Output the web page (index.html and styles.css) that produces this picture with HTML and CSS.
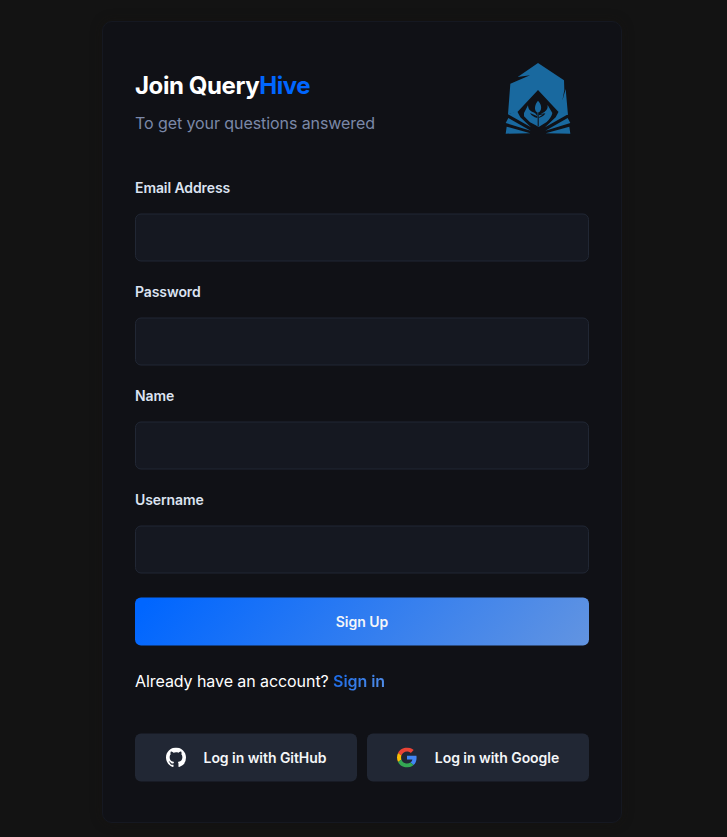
FILE: index.html
```html
<!DOCTYPE html>
<html lang="en">
<head>
<meta charset="utf-8">
<title>Join QueryHive</title>
<link rel="stylesheet" href="styles.css">
</head>
<body>
<main class="card">
  <header class="header">
    <div>
      <h1 class="title">Join Query<span>Hive</span></h1>
      <p class="subtitle">To get your questions answered</p>
    </div>
    <svg class="logo" viewBox="0 0 258 258" fill="#19699f" aria-hidden="true">
      <path d="M129 24 207 76 208 105 202 137 212 102 219 180 196 172 190 170 129 105 68 170 62 172 39 178 46 86 105 61 68 66Z"/>
      <path d="M39 178 66 168 76 187 108 217ZM40 189 107 227 32 204ZM35 215 106 235 32 236Z"/>
      <path d="M219 178 192 168 182 187 150 217ZM218 189 151 227 226 204ZM223 215 152 235 226 236Z"/>
      <path d="M129 137Q141 150 138 163Q136 171 131 173L131 181 145 178 131 187V216Q119 209 105 202L87 184V174L99 151Q99 165 111 170Q124 174 127 184V173Q121 171 120 162Q119 149 129 137Z"/>
      <path d="M158 150 172 174Q170 187 155 201L131 216V189Q147 184 151 175L137 177Q160 169 158 150Z"/>
      <path d="M105 174 127 184V189Q111 185 105 174Z" fill="#101116"/>
      <path d="M128 172H131V214H128Z" fill="#101116"/>
    </svg>
  </header>
  <form>
    <label class="field">Email Address<input type="email"></label>
    <label class="field">Password<input type="password"></label>
    <label class="field">Name<input type="text"></label>
    <label class="field">Username<input type="text"></label>
    <button class="submit" type="button">Sign Up</button>
  </form>
  <p class="account">Already have an account? <a>Sign in</a></p>
  <div class="social">
    <button type="button">
      <svg viewBox="0 0 16 16" fill="#fff"><path d="M8 0C3.58 0 0 3.58 0 8c0 3.54 2.29 6.53 5.47 7.59.4.07.55-.17.55-.38 0-.19-.01-.82-.01-1.49-2.01.37-2.53-.49-2.69-.94-.09-.23-.48-.94-.82-1.13-.28-.15-.68-.52-.01-.53.63-.01 1.08.58 1.23.82.72 1.21 1.87.87 2.33.66.07-.52.28-.87.51-1.07-1.78-.2-3.64-.89-3.64-3.95 0-.87.31-1.59.82-2.15-.08-.2-.36-1.02.08-2.12 0 0 .67-.21 2.2.82A7.5 7.5 0 0 1 8 3.86c.68 0 1.36.09 2 .27 1.53-1.04 2.2-.82 2.2-.82.44 1.1.16 1.92.08 2.12.51.56.82 1.27.82 2.15 0 3.07-1.87 3.75-3.65 3.95.29.25.54.73.54 1.48 0 1.07-.01 1.93-.01 2.2 0 .21.15.46.55.38A8 8 0 0 0 16 8c0-4.42-3.58-8-8-8Z"/></svg>
      <span>Log in with GitHub</span>
    </button>
    <button type="button">
      <svg viewBox="0 0 48 48"><path fill="#ea4335" d="M24 9.5c3.54 0 6.71 1.22 9.21 3.6l6.85-6.85C35.9 2.38 30.47 0 24 0 14.62 0 6.51 5.38 2.56 13.22l7.98 6.19C12.43 13.72 17.74 9.5 24 9.5z"/><path fill="#4285f4" d="M46.98 24.55c0-1.57-.15-3.09-.38-4.55H24v9.02h12.94c-.58 2.96-2.26 5.48-4.78 7.18l7.73 6c4.51-4.18 7.09-10.36 7.09-17.65z"/><path fill="#fbbc05" d="M10.53 28.59A14.5 14.5 0 0 1 9.77 24c0-1.6.27-3.14.76-4.59l-7.98-6.19A23.9 23.9 0 0 0 0 24c0 3.88.92 7.54 2.56 10.78z"/><path fill="#34a853" d="M24 48c6.48 0 11.93-2.13 15.89-5.81l-7.73-6c-2.15 1.45-4.92 2.3-8.16 2.3-6.26 0-11.57-4.22-13.47-9.91l-7.98 6.19C6.51 42.62 14.62 48 24 48z"/></svg>
      <span>Log in with Google</span>
    </button>
  </div>
</main>
</body>
</html>
```
FILE: styles.css
```css
* { box-sizing: border-box; }
body {
  margin: 0;
  height: 837px;
  overflow: hidden;
  background: #131313;
  color: #fff;
  font: 16px/24px Inter, "Liberation Sans", sans-serif;
}
.card {
  width: 520px;
  height: 802px;
  margin: 20.5px 0 0 102px;
  padding: 32px;
  border: 1px solid #151821;
  border-radius: 10px;
  background: #101116;
  box-shadow: 0 0 12px rgba(24, 20, 16, .4);
}
.header { display: flex; justify-content: space-between; height: 120.5px; }
.title { margin: 16.5px 0 0; font-size: 24px; line-height: 31px; font-weight: 700; letter-spacing: -.42px; }
.title span { color: #0066ff; }
.subtitle { margin: 10px 0 0; line-height: 24px; color: #7b88a8; letter-spacing: -.08px; }
.logo { width: 86px; height: 86px; margin: 1.5px 8px 0 0; }
.field {
  display: block;
  height: 104px;
  padding-top: 2px;
  color: #dce3f1;
  font-size: 14px;
  line-height: 24px;
  font-weight: 600;
  letter-spacing: -.09px;
}
.field input {
  display: block;
  width: 100%;
  height: 48px;
  margin-top: 13.5px;
  border: 1px solid #212734;
  border-radius: 6px;
  background: #151821;
  outline: 0;
  transform: translateY(-.5px);
}
.submit {
  display: block;
  width: 100%;
  height: 48px;
  margin-top: 7.5px;
  border: 0;
  border-radius: 6px;
  background: linear-gradient(129deg, #0066ff 3%, #6294e1 100%);
  color: #f4f6f8;
  font: 600 14px/18px Inter, sans-serif;
  transform: translateY(-.5px);
}
.account { margin: 23.5px 0 0; height: 64.5px; letter-spacing: -.07px; }
.account a {
  font-weight: 600;
  background: linear-gradient(129deg, #1768e8, #5590e8);
  background-clip: text;
  color: transparent;
}
.social { display: flex; gap: 10px; }
.social button {
  flex: 1;
  height: 48px;
  display: flex;
  align-items: center;
  justify-content: center;
  gap: 18px;
  padding: 0;
  border: 0;
  border-radius: 6px;
  background: #212734;
  color: #f4f6f8;
  font: 600 14px/18px Inter, sans-serif;
  letter-spacing: -.05px;
  transform: translateY(-.5px);
}
.social svg { width: 20px; height: 20px; }
```
